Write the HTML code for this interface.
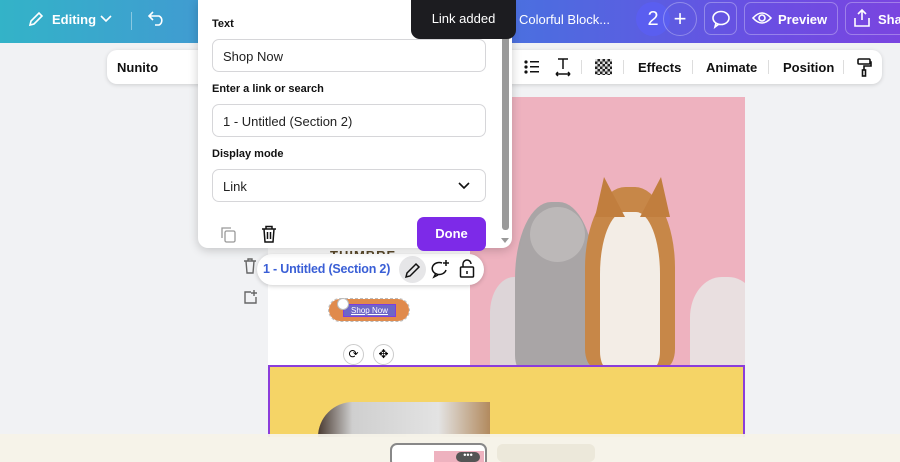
<!DOCTYPE html>
<html><head><style>
*{box-sizing:border-box;margin:0;padding:0}
html,body{width:900px;height:462px;overflow:hidden}
body{background:#f1f2f4;font-family:"Liberation Sans",sans-serif;position:relative}
.hdr{position:absolute;left:0;top:0;width:900px;height:43px;background:linear-gradient(90deg,#33b3c8 0%,#4593d4 30%,#4d6ce0 60%,#6a4ee2 85%,#7a45e0 100%)}
.w{color:#fff;position:absolute;font-weight:bold;font-size:13px}
.tb{position:absolute;left:107px;top:50px;width:775px;height:34px;background:#fff;border-radius:10px;box-shadow:0 1px 4px rgba(0,0,0,.15)}
.tb span{position:absolute;top:10px;font-size:13px;font-weight:bold;color:#111}
.sep{position:absolute;top:10px;width:1px;height:14px;background:#ddd}
.pop{position:absolute;left:198px;top:0;width:314px;height:248px;background:#fff;border-radius:0 0 10px 10px;box-shadow:0 2px 10px rgba(0,0,0,.2)}
.lab{position:absolute;left:14px;font-size:11px;font-weight:bold;color:#111}
.inp{position:absolute;left:14px;width:274px;height:33px;border:1px solid #d6d6d9;border-radius:7px;font-size:13px;color:#222;padding:9px 10px}
</style></head><body>
<div class="hdr"></div>
<svg style="position:absolute;left:27px;top:10px" width="18" height="18" viewBox="0 0 18 18" fill="none" stroke="#fff" stroke-width="1.6"><path d="M3 15l1-4 8-8 3 3-8 8z"/></svg>
<div class="w" style="left:52px;top:12px">Editing</div>
<svg style="position:absolute;left:100px;top:15px" width="12" height="8"><path d="M1 1l5 5 5-5" stroke="#fff" fill="none" stroke-width="1.6"/></svg>
<div style="position:absolute;left:131px;top:12px;width:1px;height:18px;background:rgba(255,255,255,.4)"></div>
<svg style="position:absolute;left:148px;top:10px" width="18" height="16" fill="none" stroke="#fff" stroke-width="1.6"><path d="M5 2L1 6l4 4M1 6h10a5 5 0 010 9H7"/></svg>
<div class="w" style="left:519px;top:12px;font-weight:normal">Colorful Block...</div>
<div style="position:absolute;left:636px;top:2px;width:34px;height:34px;border-radius:50%;background:#5a5ef0;color:#fff;font-size:20px;text-align:center;line-height:34px">2</div>
<div style="position:absolute;left:663px;top:2px;width:34px;height:34px;border-radius:50%;border:1px solid rgba(255,255,255,.3);color:#fff;font-size:22px;text-align:center;line-height:31px">+</div>
<div style="position:absolute;left:704px;top:2px;width:33px;height:33px;border-radius:7px;border:1px solid rgba(255,255,255,.3)"></div>
<svg style="position:absolute;left:711px;top:9px" width="20" height="20" fill="none" stroke="#fff" stroke-width="1.6"><ellipse cx="10" cy="9" rx="8" ry="6.5"/><path d="M5 14l-1 4 4-3"/></svg>
<div style="position:absolute;left:744px;top:2px;width:94px;height:33px;border-radius:7px;border:1px solid rgba(255,255,255,.3)"></div>
<svg style="position:absolute;left:752px;top:10px" width="20" height="16" fill="none" stroke="#fff" stroke-width="1.6"><path d="M1 8q9-10 18 0q-9 10-18 0z"/><circle cx="10" cy="8" r="3"/></svg>
<div class="w" style="left:778px;top:12px">Preview</div>
<div style="position:absolute;left:845px;top:2px;width:70px;height:33px;border-radius:7px;border:1px solid rgba(255,255,255,.3)"></div>
<svg style="position:absolute;left:853px;top:8px" width="18" height="20" fill="none" stroke="#fff" stroke-width="1.6"><path d="M9 12V2M5 6l4-4 4 4M2 10v8h14v-8"/></svg>
<div class="w" style="left:878px;top:12px">Sha</div>

<div class="tb">
<span style="left:10px;font-size:13px">Nunito</span>
<svg style="position:absolute;left:417px;top:9px" width="16" height="16"><g fill="#111"><circle cx="2" cy="3" r="1.6"/><circle cx="2" cy="8" r="1.6"/><circle cx="2" cy="13" r="1.6"/><rect x="6" y="2" width="9" height="1.5"/><rect x="6" y="7" width="9" height="1.5"/><rect x="6" y="12" width="9" height="1.5"/></g></svg>
<svg style="position:absolute;left:447px;top:7px" width="18" height="20" fill="none" stroke="#111" stroke-width="1.5"><path d="M4 2h10M9 2v10M2 17h14M2 17l2-2M2 17l2 2M16 17l-2-2M16 17l-2 2"/></svg>
<div class="sep" style="left:474px"></div>
<div style="position:absolute;left:488px;top:9px;width:17px;height:16px;background:repeating-conic-gradient(#222 0 25%,#ddd 0 50%) 0 0/5px 5px"></div>
<div class="sep" style="left:516px"></div>
<span style="left:531px">Effects</span>
<div class="sep" style="left:585px"></div>
<span style="left:599px">Animate</span>
<div class="sep" style="left:661px"></div>
<span style="left:676px">Position</span>
<div class="sep" style="left:736px"></div>
<svg style="position:absolute;left:749px;top:8px" width="16" height="20" fill="none" stroke="#111" stroke-width="1.6"><rect x="2" y="1" width="12" height="5" rx="1"/><path d="M14 4h1v4H8v4"/><rect x="6.5" y="12" width="3" height="6"/></svg>
</div>

<div style="position:absolute;left:268px;top:97px;width:202px;height:268px;background:#fff"></div>
<div style="position:absolute;left:470px;top:97px;width:275px;height:268px;background:#eeb2bf;overflow:hidden">
 <div style="position:absolute;left:20px;top:180px;width:60px;height:90px;border-radius:40% 40% 0 0;background:#ddd5d8"></div>
 <div style="position:absolute;left:45px;top:105px;width:80px;height:170px;border-radius:45% 45% 10% 10%;background:#a9a5a6"></div>
 <div style="position:absolute;left:60px;top:110px;width:55px;height:55px;border-radius:50%;background:#bcb8b8"></div>
 <div style="position:absolute;left:115px;top:90px;width:90px;height:180px;border-radius:45% 45% 10% 10%;background:#c78748"></div>
 <div style="position:absolute;left:130px;top:115px;width:60px;height:155px;border-radius:40% 40% 10% 10%;background:#f3ede6"></div>
 <div style="position:absolute;left:125px;top:80px;width:30px;height:40px;background:#c17e3e;clip-path:polygon(0 100%,30% 0,100% 100%)"></div>
 <div style="position:absolute;left:170px;top:80px;width:30px;height:40px;background:#c17e3e;clip-path:polygon(0 100%,70% 0,100% 100%)"></div>
 <div style="position:absolute;left:220px;top:180px;width:70px;height:90px;border-radius:45% 45% 0 0;background:#e9dfe0"></div>
</div>
<div style="position:absolute;left:268px;top:365px;width:477px;height:72px;background:#f5d466;border:2px solid #8b3ddb;border-bottom:none"></div>
<div style="position:absolute;left:318px;top:402px;width:172px;height:35px;background:linear-gradient(90deg,#4a3b32 0%,#cfcfcf 20%,#e3e3e3 70%,#b28a5e 100%);border-radius:40px 0 0 0"></div>
<div style="position:absolute;left:0;top:434px;width:900px;height:28px;background:rgba(245,242,232,.95)"></div>
<div style="position:absolute;left:390px;top:443px;width:97px;height:25px;border:2px solid #888;border-radius:7px;background:#fff"></div>
<div style="position:absolute;left:434px;top:451px;width:50px;height:11px;background:#eeb2bf"></div>
<div style="position:absolute;left:456px;top:452px;width:24px;height:10px;border-radius:5px;background:#555;color:#fff;font-size:9px;text-align:center;line-height:6px">•••</div>
<div style="position:absolute;left:497px;top:444px;width:98px;height:18px;border-radius:6px;background:#ece8da"></div>

<div style="position:absolute;left:329px;top:299px;width:80px;height:22px;border-radius:11px;background:#e08a4c;outline:1px dashed #bbb"></div>
<div style="position:absolute;left:343px;top:304px;width:53px;height:13px;border:1px solid #7b3fe0;background:#6d66c8;color:#fff;font-size:8px;text-align:center;text-decoration:underline;line-height:11px">Shop Now</div>
<div style="position:absolute;left:337px;top:298px;width:12px;height:12px;border-radius:50%;background:#fff;border:1px solid #bbb"></div>
<div style="position:absolute;left:343px;top:344px;width:21px;height:21px;border-radius:50%;background:#fff;border:1px solid #ccc;font-size:12px;text-align:center;line-height:19px">⟳</div>
<div style="position:absolute;left:373px;top:344px;width:21px;height:21px;border-radius:50%;background:#fff;border:1px solid #ccc;font-size:12px;text-align:center;line-height:19px">✥</div>
<div style="position:absolute;left:330px;top:248px;font-size:13px;font-weight:bold;color:#5b4a2b;letter-spacing:1px">THIMBRE</div>
<svg style="position:absolute;left:243px;top:258px" width="14" height="16" fill="none" stroke="#666" stroke-width="1.4"><path d="M1 3h12M5 3V1h4v2M3 3l1 12h6l1-12"/></svg>
<svg style="position:absolute;left:243px;top:289px" width="14" height="16" fill="none" stroke="#666" stroke-width="1.4"><path d="M8 3H2v11h11V8M11 1v6M8 4h6"/></svg>

<div style="position:absolute;left:257px;top:254px;width:227px;height:31px;border-radius:16px;background:#fff;box-shadow:0 1px 5px rgba(0,0,0,.2)"></div>
<div style="position:absolute;left:263px;top:262px;font-size:12.5px;font-weight:bold;color:#3a5fd6;letter-spacing:-0.2px">1 - Untitled (Section 2)</div>
<div style="position:absolute;left:399px;top:256px;width:27px;height:27px;border-radius:50%;background:#e6e6e8"></div>
<svg style="position:absolute;left:404px;top:261px" width="18" height="18" fill="none" stroke="#111" stroke-width="1.5"><path d="M2 16l1-4 9-9 3 3-9 9z"/></svg>
<svg style="position:absolute;left:431px;top:259px" width="20" height="20" fill="none" stroke="#111" stroke-width="1.5"><path d="M11 4a7 6 0 10 4 7"/><path d="M5 14l-2 4 4-2M15 1v6M12 4h6"/></svg>
<svg style="position:absolute;left:459px;top:259px" width="16" height="20" fill="none" stroke="#111" stroke-width="1.5"><rect x="1.5" y="8" width="13" height="10" rx="1"/><path d="M4 8V5a4 4 0 018 0M8 12v3"/></svg>

<div class="pop">
<div class="lab" style="top:18px">Text</div>
<div class="inp" style="top:39px">Shop Now</div>
<div class="lab" style="top:83px">Enter a link or search</div>
<div class="inp" style="top:104px">1 - Untitled (Section 2)</div>
<div class="lab" style="top:148px">Display mode</div>
<div class="inp" style="top:169px">Link</div>
<svg style="position:absolute;left:260px;top:182px" width="12" height="8"><path d="M1 1l5 5 5-5" stroke="#111" fill="none" stroke-width="1.6"/></svg>
<svg style="position:absolute;left:22px;top:226px" width="17" height="17" fill="none" stroke="#999" stroke-width="1.3"><rect x="5" y="5" width="10" height="11" rx="1.5"/><path d="M2 12V2h9"/></svg>
<svg style="position:absolute;left:63px;top:225px" width="16" height="18" fill="none" stroke="#111" stroke-width="1.5"><path d="M1 4h14M5 4V1.5h6V4M3 4l1 13h8l1-13M6.5 7v7M9.5 7v7"/></svg>
<div style="position:absolute;left:219px;top:217px;width:69px;height:34px;border-radius:7px;background:#7d2ae8;color:#fff;font-weight:bold;font-size:13px;text-align:center;line-height:34px">Done</div>
<div style="position:absolute;left:304px;top:8px;width:7px;height:222px;border-radius:3px;background:#9a9a9a"></div>
<div style="position:absolute;left:303px;top:238px;width:0;height:0;border-left:4px solid transparent;border-right:4px solid transparent;border-top:5px solid #999"></div>
</div>
<div style="position:absolute;left:411px;top:0;width:105px;height:39px;background:#1c1c20;border-radius:0 0 9px 9px;color:#fff;font-size:13px;text-align:center;line-height:38px">Link added</div>
</body></html>
